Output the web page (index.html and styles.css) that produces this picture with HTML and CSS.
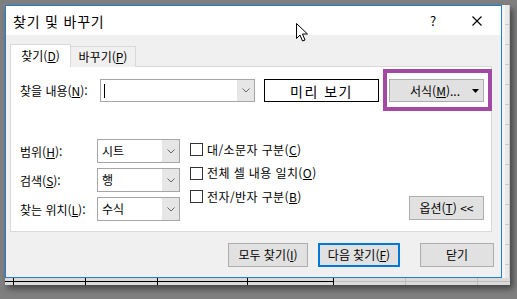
FILE: index.html
```html
<!DOCTYPE html>
<html lang="ko">
<head>
  <meta charset="UTF-8" />
  <title>찾기 및 바꾸기</title>
  <link rel="stylesheet" href="styles.css">
</head>
<body>
  <div class="frame">
    <div class="top">
      <div class="dialog">
        <div class="titlebar">
          <span class="title">찾기 및 바꾸기</span>
          <span class="help">?</span>
          <svg class="close" width="10" height="10" viewBox="0 0 10 10">
            <path d="M0.5 0.5 L9.5 9.5 M9.5 0.5 L0.5 9.5" stroke="#000" stroke-width="1.1" fill="none" />
          </svg>
        </div>

        <div class="body">
          <div class="tabs">
            <div class="tab active">찾기(<u>D</u>)</div>
            <div class="tab">바꾸기(<u>P</u>)</div>
          </div>

          <div class="panel">
            <div class="find-row">
              <span class="find-label">찾을 내용(<u>N</u>):</span>
              <div class="combo wide">
                <span class="combo-text"><span class="caret"></span></span>
                <span class="drop">
                  <svg width="8" height="5" viewBox="0 0 8 5"><path d="M0.5 0.5 L4 4 L7.5 0.5" stroke="#666" fill="none" /></svg>
                </span>
              </div>
              <div class="preview">미리 보기</div>
              <div class="format-wrap">
                <div class="btn format">
                  <span>서식(<u>M</u>)...</span>
                  <svg width="7" height="4" viewBox="0 0 7 4"><path d="M0 0 H7 L3.5 4 Z" fill="#000" /></svg>
                </div>
                <div class="highlight"></div>
              </div>
            </div>

            <div class="options-area">
              <div class="fields">
                <span class="field-label">범위(<u>H</u>):</span>
                <div class="combo">
                  <span class="combo-text">시트</span>
                  <span class="drop">
                    <svg width="8" height="5" viewBox="0 0 8 5"><path d="M0.5 0.5 L4 4 L7.5 0.5" stroke="#666" fill="none" /></svg>
                  </span>
                </div>
                <span class="field-label">검색(<u>S</u>):</span>
                <div class="combo">
                  <span class="combo-text">행</span>
                  <span class="drop">
                    <svg width="8" height="5" viewBox="0 0 8 5"><path d="M0.5 0.5 L4 4 L7.5 0.5" stroke="#666" fill="none" /></svg>
                  </span>
                </div>
                <span class="field-label">찾는 위치(<u>L</u>):</span>
                <div class="combo">
                  <span class="combo-text">수식</span>
                  <span class="drop">
                    <svg width="8" height="5" viewBox="0 0 8 5"><path d="M0.5 0.5 L4 4 L7.5 0.5" stroke="#666" fill="none" /></svg>
                  </span>
                </div>
              </div>

              <div class="checks">
                <label class="check"><span class="box"></span>대/소문자 구분(<u>C</u>)</label>
                <label class="check"><span class="box"></span>전체 셀 내용 일치(<u>O</u>)</label>
                <label class="check"><span class="box"></span>전자/반자 구분(<u>B</u>)</label>
              </div>

              <div class="btn options-btn">옵션(<u>T</u>) &lt;&lt;</div>
            </div>
          </div>

          <div class="actions">
            <div class="btn find-all">모두 찾기(<u>I</u>)</div>
            <div class="btn find-next">다음 찾기(<u>F</u>)</div>
            <div class="btn close-btn">닫기</div>
          </div>
        </div>

        <svg class="pointer" width="13" height="20" viewBox="0 0 13 20">
          <path d="M0.5 0.5 L0.5 15.5 L4 12 L6.5 18 L9 17 L6.5 11 L11.5 11 Z" fill="#fff" stroke="#000" stroke-width="1" stroke-linejoin="round" />
        </svg>
      </div>

      <div class="sheet-side"></div>
    </div>

    <svg class="sheet-bottom" width="505" height="7" viewBox="0 0 505 7">
      <rect width="505" height="7" fill="#dadada" />
      <line x1="0" y1="3.5" x2="328" y2="3.5" stroke="#000" />
      <line x1="328" y1="3.5" x2="505" y2="3.5" stroke="#bcbcbc" />
      <line x1="8.5" y1="0" x2="8.5" y2="7" stroke="#000" />
      <line x1="80.5" y1="0" x2="80.5" y2="7" stroke="#000" />
      <line x1="152.5" y1="0" x2="152.5" y2="7" stroke="#000" />
      <line x1="242.5" y1="0" x2="242.5" y2="7" stroke="#000" />
      <line x1="328.5" y1="0" x2="328.5" y2="7" stroke="#000" />
      <line x1="400.5" y1="0" x2="400.5" y2="7" stroke="#bcbcbc" />
      <line x1="472.5" y1="0" x2="472.5" y2="7" stroke="#bcbcbc" />
    </svg>
  </div>
</body>
</html>
```

FILE: styles.css
```css
* {
  box-sizing: border-box;
}

body {
  margin: 0;
  width: 517px;
  height: 299px;
  overflow: hidden;
  background-color: #7f7f7f;
  font-family: 'Noto Sans CJK KR', 'Noto Sans', sans-serif;
  font-size: 12px;
  line-height: 16px;
  color: #000;
}

u {
  text-decoration-thickness: 1px;
  text-underline-offset: 1px;
}

.frame {
  margin: 5px 0 0 5px;
  width: 505px;
  box-shadow: 3px 4px 6px rgba(0, 0, 0, 0.45);
}

.top {
  display: flex;
}

.dialog {
  position: relative;
  width: 497px;
  height: 273px;
  border: 1px solid #1c7fd6;
  background-color: #f0f0f0;
  display: flex;
  flex-direction: column;
}

.titlebar {
  height: 29px;
  background-color: #fff;
  display: flex;
  align-items: center;
  padding-left: 7px;
  font-size: 14px;
}

.title {
  flex: 1;
  letter-spacing: 0.8px;
}

.help {
  width: 10px;
  text-align: center;
  font-size: 13px;
  margin-right: 34px;
}

.close {
  margin-right: 19px;
}

.body {
  flex: 1;
  padding: 9px 8px 10px 4px;
}

.tabs {
  display: flex;
  align-items: flex-end;
  height: 23px;
  margin-bottom: -1px;
  position: relative;
  z-index: 1;
}

.tab {
  height: 21px;
  width: 66px;
  margin-left: -1px;
  border: 1px solid #d9d9d9;
  border-bottom: none;
  background-color: #f0f0f0;
  display: flex;
  align-items: center;
  justify-content: center;
}

.tab.active {
  height: 23px;
  width: 61px;
  margin-left: 0;
  background-color: #fff;
  position: relative;
  z-index: 2;
}

.panel {
  height: 166px;
  margin-right: 1px;
  border: 1px solid #d9d9d9;
  background-color: #fff;
  padding: 12px 7px 0 9px;
}

.find-row {
  display: flex;
  align-items: center;
}

.find-label {
  width: 80px;
}

.combo {
  height: 24px;
  border: 1px solid #a6a6a6;
  background-color: #fff;
  display: flex;
}

.combo.wide {
  width: 155px;
  height: 23px;
}

.combo-text {
  flex: 1;
  display: flex;
  align-items: center;
  padding-left: 4px;
}

.caret {
  width: 1px;
  height: 14px;
  background-color: #000;
  margin-left: -1px;
}

.drop {
  width: 17px;
  background-color: #e6e6e6;
  display: flex;
  align-items: center;
  justify-content: center;
}

.preview {
  margin-left: 9px;
  width: 115px;
  height: 23px;
  border: 1px solid #000;
  display: flex;
  align-items: center;
  justify-content: center;
  font-size: 14px;
  letter-spacing: 1.5px;
}

.format-wrap {
  position: relative;
  margin-left: 10px;
}

.btn {
  height: 24px;
  border: 1px solid #adadad;
  background-color: #e1e1e1;
  display: flex;
  align-items: center;
  justify-content: center;
}

.format {
  width: 95px;
  height: 23px;
  justify-content: space-between;
  padding: 0 4px 0 20px;
}

.highlight {
  position: absolute;
  top: -10px;
  left: -6px;
  right: -8px;
  bottom: -9px;
  border: 4px solid #a349a4;
}

.options-area {
  display: flex;
  margin-top: 37px;
}

.fields {
  display: grid;
  grid-template-columns: 77px 83px;
  row-gap: 5px;
  align-items: center;
}

.field-label {
  padding-top: 2px;
}

.checks {
  margin-left: 10px;
  margin-top: 4px;
  display: flex;
  flex-direction: column;
  gap: 10.5px;
}

.check {
  display: flex;
  align-items: center;
  height: 13px;
  letter-spacing: 0.4px;
}

.box {
  width: 13px;
  height: 13px;
  border: 1px solid #333;
  background-color: #fff;
  margin-right: 4px;
}

.options-btn {
  margin-left: auto;
  align-self: flex-end;
  margin-bottom: 1px;
  width: 75px;
}

.actions {
  display: flex;
  justify-content: flex-end;
  margin-top: 11px;
}

.find-all {
  width: 80px;
}

.find-next {
  width: 82px;
  margin-left: 10px;
  border: 2px solid #0078d7;
}

.close-btn {
  width: 74px;
  margin-left: 20px;
  margin-right: -1px;
}

.pointer {
  position: absolute;
  left: 290px;
  top: 17px;
}

.sheet-side {
  width: 8px;
  height: 273px;
  background-color: #e9e9e9;
  border-left: 3px solid #f3f3f3;
  border-right: 1px solid #c6c6c6;
  background-image: repeating-linear-gradient(to bottom, transparent 0, transparent 19px, #c9c9c9 19px, #c9c9c9 20px);
}

.sheet-bottom {
  display: block;
}
```
